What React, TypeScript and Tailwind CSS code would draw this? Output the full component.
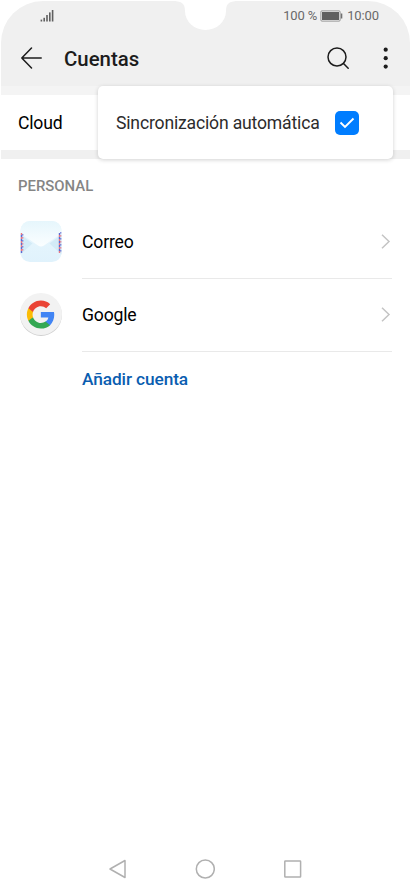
import { useState } from 'react'

interface Account {
  name: string
  icon: React.ReactNode
}

function MailIcon() {
  return (
    <svg width="44" height="44" viewBox="0 0 44 44">
      <defs>
        <linearGradient id="mail-body" x1="0" y1="0" x2="0" y2="1">
          <stop offset="0" stopColor="#e9f7fd" />
          <stop offset="1" stopColor="#e0f2fc" />
        </linearGradient>
        <linearGradient id="mail-flap" x1="0" y1="0" x2="0" y2="1">
          <stop offset="0" stopColor="#e6f6fc" />
          <stop offset="1" stopColor="#fbfeff" />
        </linearGradient>
        <clipPath id="mail-clip">
          <rect x="1.5" y="1" width="41" height="41" rx="9.5" />
        </clipPath>
      </defs>
      <g clipPath="url(#mail-clip)">
        <rect x="1" y="1" width="42" height="41" fill="url(#mail-body)" />
        <path d="M1 14L13.5 23.5L1 35Z" fill="#d3ebf7" />
        <path d="M43 14L30.5 23.5L43 35Z" fill="#d3ebf7" />
        <path d="M1 1H43V13L25 25.5Q22 27.5 19 25.5L1 13Z" fill="url(#mail-flap)" />
      </g>
      <path d="M2.5 13V33M40.5 15V33" stroke="#ea7482" strokeWidth="1.4" strokeDasharray="2 2" />
      <path d="M2.5 15V33M40.5 13V33" stroke="#5f6ad0" strokeWidth="1.4" strokeDasharray="2 2" />
      <path d="M3.8 14V32M41.8 12V32" stroke="#5f6ad0" strokeWidth="1" strokeDasharray="1.6 4.4" />
      <path d="M3.8 17V32M41.8 15V32" stroke="#ea7482" strokeWidth="1" strokeDasharray="1.6 4.4" />
    </svg>
  )
}

function GoogleIcon() {
  return (
    <svg width="44" height="44" viewBox="0 0 44 44">
      <circle cx="22" cy="22" r="20.9" fill="#cfcfcf" />
      <circle cx="22" cy="21" r="21" fill="#f2f2f2" />
      <g transform="translate(6.6 6.3) scale(1.27)">
        <path d="M22.56 12.25c0-.78-.07-1.53-.2-2.25H12v4.26h5.92c-.26 1.37-1.04 2.53-2.21 3.31v2.77h3.57c2.08-1.92 3.28-4.74 3.28-8.09z" fill="#4285f4" />
        <path d="M12 23c2.97 0 5.46-.98 7.28-2.66l-3.57-2.77c-.98.66-2.23 1.06-3.71 1.06-2.86 0-5.29-1.93-6.16-4.53H2.18v2.84C3.99 20.53 7.7 23 12 23z" fill="#34a853" />
        <path d="M5.84 14.09c-.22-.66-.35-1.36-.35-2.09s.13-1.43.35-2.09V7.07H2.18C1.43 8.55 1 10.22 1 12s.43 3.45 1.18 4.93l3.66-2.84z" fill="#fbbc05" />
        <path d="M12 5.38c1.62 0 3.06.56 4.21 1.64l3.15-3.15C17.45 2.09 14.97 1 12 1 7.7 1 3.99 3.47 2.18 7.07l3.66 2.84c.87-2.6 3.3-4.53 6.16-4.53z" fill="#ea4335" />
      </g>
    </svg>
  )
}

const ACCOUNTS: Account[] = [
  { name: 'Correo', icon: <MailIcon /> },
  { name: 'Google', icon: <GoogleIcon /> },
]

function StatusBar() {
  return (
    <div className="flex h-[30px] items-center justify-between pl-[39px] pr-[31px] text-[13px] text-[#696969]">
      <svg width="14" height="12" viewBox="0 0 14 12" fill="#606060">
        <rect x="0.6" y="9.6" width="1.6" height="1.9" />
        <rect x="3.4" y="7.8" width="1.6" height="3.7" />
        <rect x="6.2" y="5" width="1.6" height="6.5" />
        <rect x="9" y="2.4" width="1.6" height="9.1" />
        <rect x="11.8" y="0" width="1.6" height="11.5" />
      </svg>
      <div className="flex items-center">
        <span className="w-[37px] whitespace-nowrap tracking-[-0.1px]">100 %</span>
        <svg width="23" height="12" viewBox="0 0 23 12" className="mr-1">
          <rect x="0.9" y="0.9" width="19.2" height="10.2" rx="1" fill="#f8f8f8" stroke="#8a8a8a" strokeWidth="0.9" />
          <rect x="2" y="2" width="17" height="8" fill="#606060" />
          <rect x="20.8" y="3.5" width="1.5" height="5" fill="#707070" />
        </svg>
        <span className="tracking-[-0.1px]">10:00</span>
      </div>
    </div>
  )
}

function Header() {
  return (
    <header className="relative mx-px mt-px h-[94px] rounded-t-[42px] bg-[#f0f0f0]">
      <svg className="absolute left-[171px] top-[-1px]" width="67" height="31" viewBox="0 0 67 31">
        <path d="M0 0H67V1C58 1 54 3 54 11A20.5 19 0 0 1 13 11C13 3 9 1 0 1Z" fill="#fff" />
      </svg>
      <StatusBar />
      <div className="flex h-[55px] items-center pl-[19px] pr-[22px]">
        <svg width="22" height="22" viewBox="0 0 22 22" fill="none" stroke="#1c1c1c" strokeWidth="1.5" strokeLinecap="round" strokeLinejoin="round" className="-mt-px">
          <path d="M21.2 11H1.8M11.5 1L1.8 11L11.5 21" />
        </svg>
        <h1 className="ml-[22px] flex-1 pt-0.5 text-[20.4px] font-medium text-[#1c1c1c]">Cuentas</h1>
        <button className="-mt-px mr-[33px]">
          <svg width="24" height="24" viewBox="0 0 24 24" fill="none" stroke="#1c1c1c" strokeWidth="1.5" strokeLinecap="round">
            <circle cx="11" cy="11" r="9" />
            <path d="M17.5 17.5L22.2 22.2" />
          </svg>
        </button>
        <svg width="5" height="22" viewBox="0 0 5 22" fill="#1c1c1c" className="-mt-px">
          <circle cx="2.7" cy="2.7" r="2.1" />
          <circle cx="2.7" cy="11.2" r="2.1" />
          <circle cx="2.7" cy="19.6" r="2.1" />
        </svg>
      </div>
      <div className="h-[9px] bg-[#f4f4f4]" />
    </header>
  )
}

function NavBar() {
  return (
    <nav className="flex h-[46px] items-center justify-center gap-[68px] pr-0.5">
      <svg width="20" height="20" viewBox="0 0 20 20" fill="none" stroke="#b0b0b0" strokeWidth="1.5" strokeLinejoin="round">
        <path d="M18 1.5V18.5L3 10Z" />
      </svg>
      <svg width="20" height="20" viewBox="0 0 20 20" fill="none" stroke="#b0b0b0" strokeWidth="1.5">
        <circle cx="10.3" cy="10" r="9" />
      </svg>
      <svg width="20" height="20" viewBox="0 0 20 20" fill="none" stroke="#b0b0b0" strokeWidth="1.5">
        <rect x="1.8" y="2" width="15.8" height="16" rx="0.5" />
      </svg>
    </nav>
  )
}

export default function App() {
  const [autoSync, setAutoSync] = useState(true)

  return (
    <div className="relative flex h-[892px] w-[411px] flex-col overflow-hidden bg-white font-[Roboto,sans-serif]">
      <Header />

      {/* Overflow menu */}
      <button
        onClick={() => setAutoSync(s => !s)}
        className="absolute left-[98px] top-[86px] z-10 flex h-[73px] w-[295px] items-center rounded-[5px] bg-white pl-[18px] text-[17.6px] tracking-[-0.18px] text-[#2c2c2c] shadow-[0_1px_4px_rgba(0,0,0,0.18)]"
      >
        <span className="w-[219px] whitespace-nowrap pt-0.5 text-left">Sincronización automática</span>
        <span className={`flex size-6 items-center justify-center rounded-[5px] ${autoSync ? 'bg-[#007dff]' : 'border border-gray-400'}`}>
          {autoSync && (
            <svg width="16" height="12" viewBox="0 0 16 12" fill="none" stroke="#fff" strokeWidth="1.9">
              <path d="M1.5 5.5L6 10L14.5 1.5" />
            </svg>
          )}
        </span>
      </button>

      <div className="flex h-[55px] items-center pl-[18px] pt-0.5 text-[17.6px] tracking-[-0.18px] text-black">Cloud</div>
      <div className="mx-px h-[9px] shrink-0 bg-[#f0f0f0]" />

      <main className="flex-1">
        <h2 className="flex h-[47px] items-center pl-[18px] pt-[8px] text-[14.9px] font-medium text-[#858585]">PERSONAL</h2>
        {ACCOUNTS.map(account => (
          <div key={account.name} className="flex h-[73px] pl-[19px] pr-[19px]">
            <div className="mr-[19px] flex items-center pb-px">{account.icon}</div>
            <div className="flex flex-1 items-center justify-between border-b border-[#e9e9e9] text-[17.6px] tracking-[-0.18px] text-black">
              <span>{account.name}</span>
              <svg width="12" height="16" viewBox="0 0 12 16" fill="none" stroke="#c4c4c4" strokeWidth="1.5">
                <path d="M2 0.8L9 7.5L2 14.2" />
              </svg>
            </div>
          </div>
        ))}
        <button className="flex h-[55px] items-center pl-[82px] pt-px text-[17.3px] font-medium tracking-[-0.1px] text-[#0a5db0]">Añadir cuenta</button>
      </main>

      <NavBar />
    </div>
  )
}
